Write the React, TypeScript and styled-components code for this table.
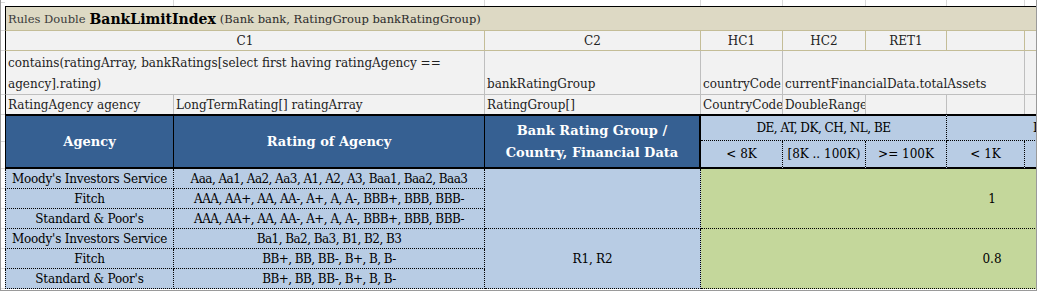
import * as React from "react";
import styled, { createGlobalStyle } from "styled-components";

// colours taken from the sheet
const tan = "#DDD9C4";
const tanLine = "#C4BD97";
const pale = "#F2F2F2";
const grayLine = "#BFBFBF";
const gridLine = "#D9D9D9";
const navy = "#366092";
const sky = "#B8CCE4";
const olive = "#C4D79B";

const GlobalStyle = createGlobalStyle`
  body {
    margin: 0;
    background: #ffffff;
  }
  * {
    box-sizing: border-box;
  }
`;

const gutterRows = [3, 28, 20, 44, 20, 27, 27, 20, 20, 20, 20, 20, 20];

const agencies = [
  { name: "Moody's Investors Service", ratings: "Aaa, Aa1, Aa2, Aa3, A1, A2, A3, Baa1, Baa2, Baa3" },
  { name: "Fitch", ratings: "AAA, AA+, AA, AA-, A+, A, A-, BBB+, BBB, BBB-" },
  { name: "Standard & Poor's", ratings: "AAA, AA+, AA, AA-, A+, A, A-, BBB+, BBB, BBB-" },
  { name: "Moody's Investors Service", ratings: "Ba1, Ba2, Ba3, B1, B2, B3" },
  { name: "Fitch", ratings: "BB+, BB, BB-, B+, B, B-" },
  { name: "Standard & Poor's", ratings: "BB+, BB, BB-, B+, B, B-" },
];

const limits = ["< 8K", "[8K .. 100K)", ">= 100K", "< 1K", ""];

const App: React.FC = () => {
  return (
    <>
      <GlobalStyle />
      <Frame>
        <Gutter>
          {gutterRows.map((h, i) => (
            <GutterRow key={i} $h={h} />
          ))}
        </Gutter>
        <Sheet>
          {/* empty excel row above the table */}
          {[1, 2, 3, 4, 5, 6, 7, 8].map((c) => (
            <StripCell key={c} $col={`${c}`} />
          ))}

          <TitleBar>
            <Keyword>Rules Double</Keyword>
            <RuleName>BankLimitIndex</RuleName>
            <Params>(Bank bank, RatingGroup bankRatingGroup)</Params>
          </TitleBar>

          <ColHead $col="1 / 3" $first>C1</ColHead>
          <ColHead $col="3">C2</ColHead>
          <ColHead $col="4">HC1</ColHead>
          <ColHead $col="5">HC2</ColHead>
          <ColHead $col="6">RET1</ColHead>
          <ColHead $col="7" />
          <ColHead $col="8" />

          <ExprCell $col="1 / 3" $first>
            <Line>contains(ratingArray, bankRatings[select first having ratingAgency ==</Line>
            <Line>agency].rating)</Line>
          </ExprCell>
          <ExprCell $col="3">
            <Line>bankRatingGroup</Line>
          </ExprCell>
          <ExprCell $col="4">
            <Line>countryCode</Line>
          </ExprCell>
          <ExprCell $col="5 / 8">
            <Line>currentFinancialData.totalAssets</Line>
          </ExprCell>
          <ExprCell $col="8" />

          <TypeCell $col="1" $first>RatingAgency agency</TypeCell>
          <TypeCell $col="2">LongTermRating[] ratingArray</TypeCell>
          <TypeCell $col="3">RatingGroup[]</TypeCell>
          <TypeCell $col="4">CountryCode</TypeCell>
          <TypeCell $col="5">DoubleRange</TypeCell>
          <TypeCell $col="6" />
          <TypeCell $col="7" />
          <TypeCell $col="8" />

          <HeadCell $col="1" $first>Agency</HeadCell>
          <HeadCell $col="2">Rating of Agency</HeadCell>
          <HeadCell $col="3" $last>
            Bank Rating Group /<br />
            Country, Financial Data
          </HeadCell>

          <CountryHead $col="4 / 7">DE, AT, DK, CH, NL, BE</CountryHead>
          <CountryHead $col="7 / 9" $indent={86}>IT, ES, FR</CountryHead>
          {limits.map((l, i) => (
            <LimitHead key={i} $col={`${i + 4}`}>
              {l}
            </LimitHead>
          ))}

          {agencies.map((a, i) => (
            <React.Fragment key={i}>
              <DataCell $col="1" $row={`${i + 8}`} $first>
                {a.name}
              </DataCell>
              <RatingCell $col="2" $row={`${i + 8}`}>
                {a.ratings}
              </RatingCell>
            </React.Fragment>
          ))}
          <DataCell $col="3" $row="8 / 11" />
          <DataCell $col="3" $row="11 / 14">R1, R2</DataCell>

          <ValueCell $row="8 / 11">1</ValueCell>
          <ValueCell $row="11 / 14">0.8</ValueCell>
        </Sheet>
      </Frame>
    </>
  );
};

const Frame = styled.div`
  display: flex;
  width: 1037px;
  height: 291px;
  border-left: 1px solid #9a9a9a;
  border-right: 1px solid #9a9a9a;
  border-bottom: 1px solid #9a9a9a;
  overflow: hidden;
  background: #ffffff;
  font-family: "DejaVu Serif", "Liberation Serif", serif;
  font-size: 12px;
  color: #000000;
`;

const Gutter = styled.div`
  display: flex;
  flex-direction: column;
  width: 4px;
  flex-shrink: 0;
`;

const GutterRow = styled.div<{ $h: number }>`
  height: ${(p) => p.$h}px;
  border-bottom: 1px solid ${gridLine};
  flex-shrink: 0;
`;

const Sheet = styled.div`
  display: grid;
  grid-template-columns: 169px 311px 216px 82px 83px 81px 78px 258px;
  grid-template-rows: 6px 25px 20px 44px 19px 27px 28px repeat(6, 20px);
  flex-shrink: 0;
`;

type Place = { $col?: string; $row?: string; $first?: boolean };

const StripCell = styled.div<Place>`
  grid-column: ${(p) => p.$col};
  grid-row: 1;
  border-right: 1px solid ${gridLine};
`;

const TitleBar = styled.div`
  grid-column: 1 / -1;
  grid-row: 2;
  display: flex;
  align-items: center;
  gap: 4px;
  padding: 1px 0 0 2px;
  background: ${tan};
  border-top: 1px solid #000000;
  border-left: 1px solid #000000;
  border-bottom: 1px solid ${tanLine};
  white-space: nowrap;
  color: #222222;
`;

const Keyword = styled.span`
  font-size: 11.5px;
  color: #3a3a3a;
`;

const RuleName = styled.span`
  font-size: 14px;
  font-weight: bold;
  color: #000000;
`;

const Params = styled.span`
  font-size: 11.5px;
  color: #2a2a2a;
`;

const ColHead = styled.div<Place>`
  grid-column: ${(p) => p.$col};
  grid-row: 3;
  display: flex;
  align-items: center;
  justify-content: center;
  background: ${pale};
  border-right: 1px solid ${tanLine};
  border-bottom: 1px solid ${tanLine};
  border-left: ${(p) => (p.$first ? "1px solid #000000" : "none")};
  color: #222222;
`;

const ExprCell = styled.div<Place>`
  grid-column: ${(p) => p.$col};
  grid-row: 4;
  display: flex;
  flex-direction: column;
  justify-content: flex-end;
  padding-left: 2px;
  background: ${pale};
  border-right: 1px solid ${grayLine};
  border-bottom: 1px solid ${grayLine};
  border-left: ${(p) => (p.$first ? "1px solid #000000" : "none")};
  overflow: hidden;
  color: #222222;
`;

const Line = styled.div`
  height: 21px;
  line-height: 23px;
  white-space: nowrap;
`;

const TypeCell = styled.div<Place>`
  grid-column: ${(p) => p.$col};
  grid-row: 5;
  display: flex;
  align-items: center;
  padding-left: 2px;
  background: ${pale};
  border-right: 1px solid ${grayLine};
  border-left: ${(p) => (p.$first ? "1px solid #000000" : "none")};
  white-space: nowrap;
  overflow: hidden;
  color: #222222;
`;

const HeadCell = styled.div<Place & { $last?: boolean }>`
  grid-column: ${(p) => p.$col};
  grid-row: 6 / 8;
  display: flex;
  align-items: center;
  justify-content: center;
  text-align: center;
  background: ${navy};
  color: #ffffff;
  font-size: 13px;
  font-weight: bold;
  line-height: 22px;
  border-top: 2px solid #000000;
  border-bottom: 2px solid #000000;
  border-right: ${(p) => (p.$last ? "2px" : "1px")} solid #000000;
  border-left: ${(p) => (p.$first ? "1px solid #000000" : "none")};
`;

const CountryHead = styled.div<Place & { $indent?: number }>`
  grid-column: ${(p) => p.$col};
  grid-row: 6;
  display: flex;
  align-items: center;
  justify-content: ${(p) => (p.$indent ? "flex-start" : "center")};
  padding-left: ${(p) => p.$indent ?? 0}px;
  background: ${sky};
  border-top: 2px solid #000000;
  border-right: 1px dotted #000000;
  border-bottom: 1px dotted #000000;
  letter-spacing: -0.5px;
  white-space: nowrap;
  overflow: hidden;
`;

const LimitHead = styled.div<Place>`
  grid-column: ${(p) => p.$col};
  grid-row: 7;
  display: flex;
  align-items: center;
  justify-content: center;
  background: ${sky};
  border-right: 1px dotted #000000;
  border-bottom: 2px solid #000000;
  white-space: nowrap;
`;

const DataCell = styled.div<Place>`
  grid-column: ${(p) => p.$col};
  grid-row: ${(p) => p.$row};
  display: flex;
  align-items: center;
  justify-content: center;
  background: ${sky};
  border-right: 1px dotted #000000;
  border-bottom: 1px dotted #000000;
  border-left: ${(p) => (p.$first ? "1px dotted #000000" : "none")};
  letter-spacing: -0.2px;
  white-space: nowrap;
`;

const RatingCell = styled(DataCell)`
  letter-spacing: -0.55px;
`;

const ValueCell = styled.div<Place>`
  grid-column: 4 / 9;
  grid-row: ${(p) => p.$row};
  display: flex;
  align-items: center;
  justify-content: center;
  background: ${olive};
  border-bottom: 1px dotted #000000;
`;

export default App;
